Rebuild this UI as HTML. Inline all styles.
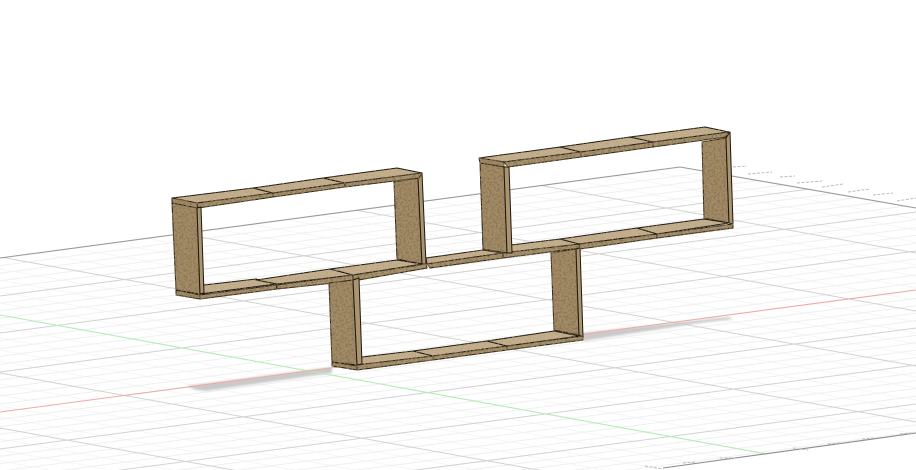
<!DOCTYPE html>
<html>
<head>
<meta charset="utf-8">
<title>3D shelf model</title>
<style>
html,body{margin:0;padding:0;background:#fff;width:916px;height:470px;overflow:hidden}
svg{display:block}
</style>
</head>
<body>
<svg width="916" height="470" viewBox="0 0 916 470" xmlns="http://www.w3.org/2000/svg">
<defs>
<clipPath id="floor"><polygon points="0,258 680,167 916,208 916,433 660,470 0,470"/></clipPath>
<filter id="soft" x="0" y="0" width="916" height="470" filterUnits="userSpaceOnUse"><feGaussianBlur stdDeviation="0.35"/></filter>
<filter id="fur" x="0" y="0" width="916" height="470" filterUnits="userSpaceOnUse"><feGaussianBlur stdDeviation="0.3"/></filter>
<filter id="sh" x="0" y="0" width="916" height="470" filterUnits="userSpaceOnUse"><feGaussianBlur stdDeviation="1.1"/></filter>
<filter id="wood" x="0" y="0" width="916" height="470" filterUnits="userSpaceOnUse">
<feTurbulence type="fractalNoise" baseFrequency="0.5" numOctaves="2" seed="4" result="n"/>
<feColorMatrix in="n" type="matrix" values="0 0 0 0 0.25  0 0 0 0 0.18  0 0 0 0 0.09  3.6 0 0 0 -1.5" result="s"/>
<feComposite in="s" in2="SourceAlpha" operator="in" result="sp"/>
<feMerge><feMergeNode in="SourceGraphic"/><feMergeNode in="sp"/></feMerge>
</filter>
<filter id="woodl" x="0" y="0" width="916" height="470" filterUnits="userSpaceOnUse">
<feTurbulence type="fractalNoise" baseFrequency="0.6" numOctaves="2" seed="9" result="n"/>
<feColorMatrix in="n" type="matrix" values="0 0 0 0 0.38  0 0 0 0 0.29  0 0 0 0 0.17  3 0 0 0 -1.7" result="s"/>
<feComposite in="s" in2="SourceAlpha" operator="in" result="sp"/>
<feMerge><feMergeNode in="SourceGraphic"/><feMergeNode in="sp"/></feMerge>
</filter>
</defs>
<rect width="916" height="470" fill="#fff"/>

<g clip-path="url(#floor)" filter="url(#soft)" fill="none">
<path stroke="#f6f6f6" stroke-width="1" d="M0 54l916 165M0 65l916 165M0 77l916 165M0 100l916 165M0 111l916 165M0 123l916 165M0 135l916 165M0 157l916 165M0 168l916 165M0 179l916 165M0 190l916 165M0 212l916 165M0 223l916 165M0 235l916 165M0 246l916 165M0 269l916 165M0 280l916 165M0 292l916 165M0 303l916 165M0 327l916 165M0 338l916 165M0 350l916 165M0 361l916 165M0 384l916 165M0 395l916 165M0 406l916 165M0 417l916 165M0 439l916 165M0 450l916 165M0 461l916 165"/>
<path stroke="#efefef" stroke-width="1" d="M0 265.6l916 -121M0 273.2l916 -121M0 280.8l916 -121M0 288.4l916 -121M0 303.4l916 -121M0 310.8l916 -121M0 318.2l916 -121M0 325.6l916 -121M0 340.8l916 -121M0 348.6l916 -121M0 356.4l916 -121M0 364.2l916 -121M0 380l916 -121M0 388l916 -121M0 396l916 -121M0 404l916 -121M0 419.4l916 -121M0 426.8l916 -121M0 434.2l916 -121M0 441.6l916 -121M0 456.4l916 -121M0 463.8l916 -121M0 471.2l916 -121M0 478.6l916 -121M0 493.8l916 -121M0 501.6l916 -121M0 509.4l916 -121M0 517.2l916 -121M0 532l916 -121M0 539l916 -121M0 546l916 -121M0 553l916 -121"/>
<path stroke="#d2d2d2" stroke-width="1" d="M0 88l916 165M0 146l916 165M0 201l916 165M0 257l916 165M0 373l916 165M0 428l916 165"/>
<path stroke="#d2d2d2" stroke-width="1" d="M0 296l916 -121M0 333l916 -121M0 372l916 -121M0 449l916 -121M0 486l916 -121M0 525l916 -121"/>
</g>

<g filter="url(#sh)" fill="#c9c9c9">
<polygon points="186,386 332,367 332,373 206,391 196,390"/>
<polygon points="582,333 728,317 733,319 700,323 583,341"/>
</g>

<g filter="url(#soft)" fill="none">
<path stroke="#b4ecb2" stroke-width="1.1" d="M0 315L767 454"/>
<path stroke="#f0a8a8" stroke-width="1.1" d="M0 412L916 290"/>
<path stroke="#9a9a9a" stroke-width="1.1" d="M0 258L680 167M680 167L916 208"/>
<path stroke="#8c8c8c" stroke-width="1.1" d="M663 468L916 433"/>
<path stroke="#bcbcbc" stroke-width="1" stroke-dasharray="3 1.5" d="M733 167l14 -1M748 174l24 -2M780 177l15 -1M797 183l25 -2M822 187l21 -3M848 192l22 -3M873 195l20 -2M897 201l19 -3M645 466l18 3M683 463l12 -1M720 458l15 0M793 448l15 2M828 444l12 -1M862 439l13 -1M900 434l13 -1"/>
</g>

<g filter="url(#fur)">
<g filter="url(#wood)" stroke="#1c170e" stroke-width="1" stroke-linejoin="round" fill="#a58c68">
<polygon points="551,253 576,249 579,335 554,330"/>
<polygon points="394,182 418,178 422,264 397,259"/>
<polygon points="702,142 726,138 729,223 704,218"/>
</g>

<g fill="#ab9470" stroke="#1c170e" stroke-width="1" stroke-linejoin="round">
<polygon points="576,249 580,248 583,337 579,335"/>
<polygon points="418,178 422,173 426,264 422,264"/>
<polygon points="726,138 730,132 733,224 729,223"/>
</g>

<g filter="url(#woodl)" fill="#c3ae8e" stroke="#1c170e" stroke-width="1" stroke-linejoin="round">
<polygon points="362,357 413,351 433,356 357,365"/>
<polygon points="413,351 487,341 507,346 433,356"/>
<polygon points="487,341 554,331 579,336 507,346"/>
<polygon points="204,285 256,279 276,284 200,294"/>
<polygon points="256,280 330,269 353,275 277,284"/>
<polygon points="330,269 397,260 422,264 353,275"/>
<polygon points="426,258 483,250 503,253 427,264"/>
<polygon points="511,245 560,239 580,244 503,253"/>
<polygon points="560,239 637,228 657,234 579,244"/>
<polygon points="637,228 704,219 729,223 657,234"/>
<polygon points="172,198 253,188 273,193 197,203"/>
<polygon points="253,188 323,178 345,183 273,193"/>
<polygon points="323,178 397,168 422,173 345,183"/>
<polygon points="479,158 560,147 581,152 504,162"/>
<polygon points="560,147 630,137 653,142 581,152"/>
<polygon points="630,137 705,127 729,132 653,142"/>
</g>

<g filter="url(#wood)" fill="#ab9470" stroke="#1c170e" stroke-width="1" stroke-linejoin="round">
<polygon points="357,365 433,356 433,360 357,370"/>
<polygon points="433,356 507,346 507,350 433,360"/>
<polygon points="507,346 583,336 583,340 507,350"/>
<polygon points="200,295 276,285 277,289 200,299"/>
<polygon points="277,285 353,275 353,281 277,289"/>
<polygon points="353,275 426,264 427,268 353,281"/>
<polygon points="427,264 503,253 503,258 430,268"/>
<polygon points="503,253 580,244 580,248 503,258"/>
<polygon points="579,244 657,234 657,238 580,249"/>
<polygon points="657,234 733,224 733,228 657,238"/>
<polygon points="197,203 273,193 273,197 198,208"/>
<polygon points="273,193 345,183 345,187 273,197"/>
<polygon points="345,183 422,173 419,178 345,187"/>
<polygon points="504,162 581,152 581,157 508,167"/>
<polygon points="581,152 653,142 653,147 581,157"/>
<polygon points="653,142 729,132 726,137 653,147"/>
</g>

<g filter="url(#wood)" fill="#a58c68" stroke="#1c170e" stroke-width="1" stroke-linejoin="round">
<polygon points="172,198 197,203 197,208 172,203"/>
<polygon points="479,158 504,162 504,167 480,163"/>
<polygon points="176,290 200,295 200,299 176,295"/>
<polygon points="332,362 357,366 357,370 332,366"/>
<polygon points="172,203 197,208 200,294 176,290"/>
<polygon points="480,163 504,167 507,253 483,249"/>
<polygon points="329,283 353,280 357,365 332,362"/>
</g>
<g fill="#ab9470" stroke="#1c170e" stroke-width="1" stroke-linejoin="round">
<polygon points="197,208 201,207 204,293 200,294"/>
<polygon points="504,167 509,167 512,253 507,253"/>
<polygon points="353,280 359,278 362,364 357,365"/>
</g>
</g>
</svg>
</body>
</html>
